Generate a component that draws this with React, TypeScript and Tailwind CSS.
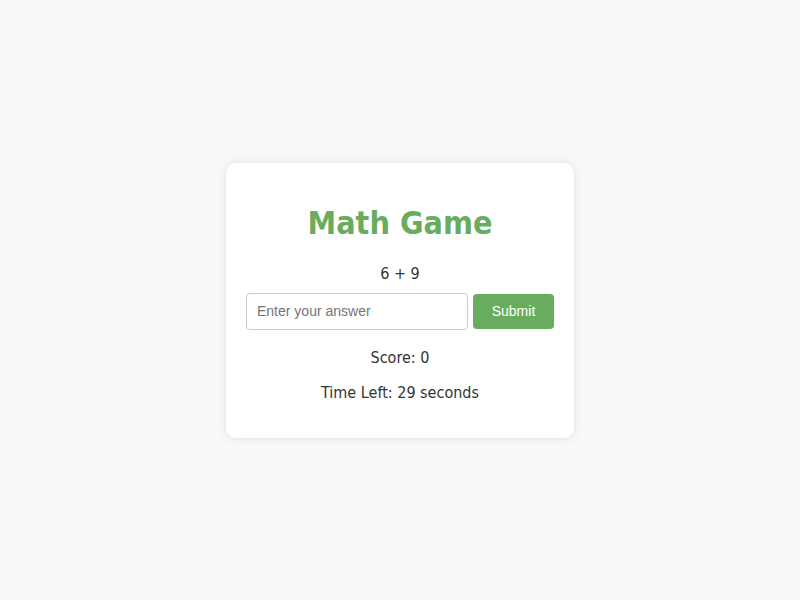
import React from "react";

export default function App() {
  return (
    <div className="min-h-screen w-full bg-[#f7f8fa] flex items-center justify-center" style={{ fontFamily: "Tahoma, 'DejaVu Sans Condensed', 'DejaVu Sans', sans-serif" }}>
      <div className="w-[348px] bg-white rounded-[10px] shadow-[0_0_10px_rgba(0,0,0,0.1)] px-5 pt-[41px] pb-[36px] flex flex-col items-center text-[#333]">
        <h1 className="text-[32px] font-bold text-[#68ad5e] leading-[38px]">Math Game</h1>
        <p className="mt-[22px] text-[16px] leading-[19px]">6 + 9</p>
        <div className="mt-[10px] w-full flex items-center gap-[5px]">
          <input
            type="text"
            placeholder="Enter your answer"
            className="w-[222px] h-[37px] border border-[#ccc] rounded-[4px] px-[10px] text-[14px] text-[#333] placeholder-[#757575] outline-none"
            style={{ fontFamily: "'Liberation Sans', Arial, sans-serif" }}
          />
          <button
            className="w-[81px] h-[35px] bg-[#68ad5e] text-white rounded-[4px] text-[14px]"
            style={{ fontFamily: "'Liberation Sans', Arial, sans-serif" }}
          >
            Submit
          </button>
        </div>
        <p className="mt-[18px] text-[16px] leading-[19px]">Score: 0</p>
        <p className="mt-[16px] text-[16px] leading-[19px]">Time Left: 29 seconds</p>
      </div>
    </div>
  );
}
